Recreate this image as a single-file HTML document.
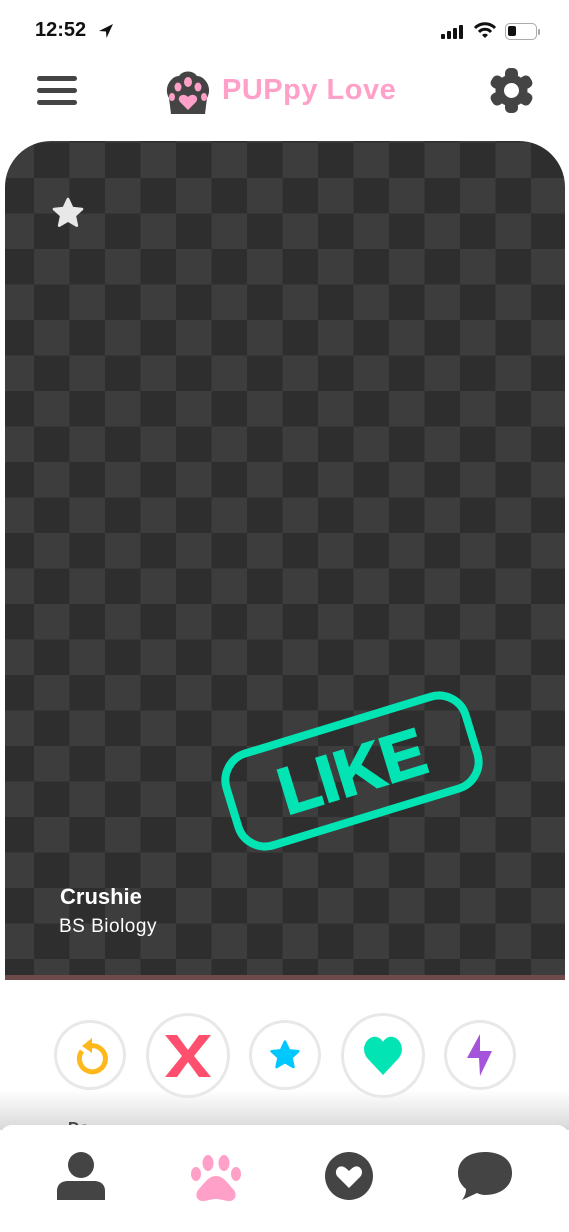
<!DOCTYPE html>
<html><head><meta charset="utf-8"><style>
*{margin:0;padding:0;box-sizing:border-box}
body{width:569px;height:1232px;background:#fff;position:relative;overflow:hidden;font-family:"Liberation Sans",sans-serif}
.abs{position:absolute}
.card{left:5px;top:141px;width:560px;height:839px;border-radius:46px 46px 0 0;overflow:hidden;
background:conic-gradient(#2e2e2e 25%,#3d3d3d 0 50%,#2e2e2e 0 75%,#3d3d3d 0);background-size:71px 71px;background-position:-6.5px 1.5px;border-bottom:5px solid #6d4b4b}
.btn{border-radius:50%;border:3px solid #e8e8e8;background:#fff;display:flex;align-items:center;justify-content:center}
</style></head><body>
<div class="abs" style="left:35px;top:19px;font-size:20px;font-weight:bold;color:#111">12:52</div>
<svg class="abs" style="left:97px;top:22px" width="18" height="18" viewBox="0 0 18 18"><path d="M16 2 L2 9 L9 9.5 L9.5 16Z" fill="#111"/></svg>
<svg class="abs" style="left:440px;top:24px" width="26" height="16" viewBox="0 0 26 16"><rect x="1" y="10" width="4" height="5" rx="1" fill="#111"/><rect x="7" y="7" width="4" height="8" rx="1" fill="#111"/><rect x="13" y="4" width="4" height="11" rx="1" fill="#111"/><rect x="19" y="1" width="4" height="14" rx="1" fill="#111"/></svg>
<svg class="abs" style="left:473px;top:22px" width="24" height="18" viewBox="0 0 24 18"><path d="M2 6 A14 14 0 0 1 22 6" stroke="#111" stroke-width="3" fill="none"/><path d="M6 10 A8 8 0 0 1 18 10" stroke="#111" stroke-width="3" fill="none"/><path d="M9 13 L12 16 L15 13 A4 4 0 0 0 9 13Z" fill="#111"/></svg>
<div class="abs" style="left:505px;top:23px;width:32px;height:17px;border:1.5px solid #aaa;border-radius:5px"><div style="position:absolute;left:2px;top:2px;width:8px;height:10px;background:#111;border-radius:2px"></div></div>
<div class="abs" style="left:538px;top:29px;width:2px;height:6px;background:#aaa;border-radius:1px"></div>
<div class="abs" style="left:37px;top:76px;width:40px;height:5px;background:#444;border-radius:3px"></div>
<div class="abs" style="left:37px;top:88px;width:40px;height:5px;background:#444;border-radius:3px"></div>
<div class="abs" style="left:37px;top:100px;width:40px;height:5px;background:#444;border-radius:3px"></div>
<svg class="abs" style="left:163px;top:70px" width="50" height="44" viewBox="0 0 50 44"><path d="M6 28 C0 18 8 6 16 6 C20 0 30 0 34 6 C42 6 50 18 44 28 L42 44 L8 44Z" fill="#444"/><ellipse cx="25" cy="12" rx="4" ry="5" fill="#ffa0c8"/><ellipse cx="15" cy="17" rx="3.5" ry="4.5" fill="#ffa0c8"/><ellipse cx="35" cy="17" rx="3.5" ry="4.5" fill="#ffa0c8"/><ellipse cx="9" cy="27" rx="3" ry="4" fill="#ffa0c8"/><ellipse cx="41" cy="27" rx="3" ry="4" fill="#ffa0c8"/><path d="M25 40 L17 32 C13 27 20 22 25 27 C30 22 37 27 33 32Z" fill="#ffa0c8"/></svg>
<div class="abs" style="left:222px;top:74px;font-size:29px;font-weight:bold;color:#ffa0c8;letter-spacing:0.5px">PUPpy Love</div>
<svg class="abs" style="left:489px;top:68px" width="45" height="45" viewBox="0 0 45 45"><g fill="#444"><circle cx="22.5" cy="22.5" r="16"/><g id="t"><rect x="16" y="0" width="13" height="12" rx="5"/><rect x="16" y="33" width="13" height="12" rx="5"/></g><use href="#t" transform="rotate(60 22.5 22.5)"/><use href="#t" transform="rotate(120 22.5 22.5)"/></g><circle cx="22.5" cy="22.5" r="7.5" fill="#fff"/></svg>
<div class="abs card">
<svg class="abs" style="left:46px;top:56px" width="34" height="32" viewBox="0 0 24 23"><path d="M12 1.5 L15 8 L22 8.7 L16.8 13.4 L18.3 20.5 L12 16.8 L5.7 20.5 L7.2 13.4 L2 8.7 L9 8 Z" fill="#e8e8e8" stroke="#e8e8e8" stroke-width="2" stroke-linejoin="round"/></svg>
<div class="abs" style="left:218px;top:578px;width:258px;height:104px;border:8px solid #03e4b4;border-radius:32px;transform:rotate(-17deg);display:flex;align-items:center;justify-content:center;font-size:66px;font-weight:900;color:#03e4b4;-webkit-text-stroke:2px #03e4b4">LIKE</div>
<div class="abs" style="left:55px;top:743px;font-size:22px;font-weight:bold;color:#fff">Crushie</div>
<div class="abs" style="left:54px;top:775px;font-size:19px;color:#fff;letter-spacing:0.5px">BS Biology</div>
</div>
<div class="abs" style="left:0;top:1090px;width:569px;height:40px;background:linear-gradient(#fff,#d8d8d8)"></div>
<div class="abs" style="left:68px;top:1120px;font-size:16px;font-weight:bold;color:#444">Do</div>
<div class="abs btn" style="left:54px;top:1020px;width:72px;height:70px"><svg width="40" height="42" viewBox="0 0 40 42"><path d="M12 17 A13 13 0 1 0 20 12" stroke="#ffb81c" stroke-width="5" fill="none"/><path d="M22 4 L12 12 L22 19Z" fill="#ffb81c"/></svg></div>
<div class="abs btn" style="left:146px;top:1013px;width:84px;height:85px"><svg width="46" height="42" viewBox="0 0 46 42"><path d="M0 0 H12 L23 15 L34 0 H46 L29 21 L46 42 H34 L23 27 L12 42 H0 L17 21Z" fill="#fe4f6f"/></svg></div>
<div class="abs btn" style="left:249px;top:1020px;width:72px;height:70px"><svg width="32" height="32" viewBox="0 0 24 23"><path d="M12 1.5 L15 8 L22 8.7 L16.8 13.4 L18.3 20.5 L12 16.8 L5.7 20.5 L7.2 13.4 L2 8.7 L9 8 Z" fill="#00c8ff" stroke="#00c8ff" stroke-width="2" stroke-linejoin="round"/></svg></div>
<div class="abs btn" style="left:341px;top:1013px;width:84px;height:85px"><svg width="40" height="42" viewBox="0 0 40 42"><path d="M20 40 L5 24 C-4 14 4 0 14 2 C17 3 19 5 20 7 C21 5 23 3 26 2 C36 0 44 14 35 24Z" fill="#03e4b4"/></svg></div>
<div class="abs btn" style="left:444px;top:1020px;width:72px;height:70px"><svg width="26" height="42" viewBox="0 0 26 42"><path d="M13 0 L0 24 H12 L13 42 L25 17 H13Z" fill="#a653dc"/></svg></div>
<div class="abs" style="left:0;top:1125px;width:569px;height:107px;background:#fff;border-radius:12px 12px 0 0"></div>
<svg class="abs" style="left:56px;top:1151px" width="50" height="50" viewBox="0 0 50 50"><circle cx="25" cy="14" r="13" fill="#444"/><path d="M1 49 V40 C1 33 6 30 12 30 H38 C44 30 49 33 49 40 V49Z" fill="#444"/></svg>
<svg class="abs" style="left:190px;top:1154px" width="52" height="48" viewBox="0 0 52 48"><ellipse cx="6" cy="20" rx="5" ry="7" fill="#ffa0c8"/><ellipse cx="18" cy="9" rx="5.5" ry="8" fill="#ffa0c8"/><ellipse cx="34" cy="9" rx="5.5" ry="8" fill="#ffa0c8"/><ellipse cx="46" cy="20" rx="5" ry="7" fill="#ffa0c8"/><path d="M26 22 C18 22 14 30 8 36 C4 42 8 48 14 47 C20 46 23 45 26 45 C29 45 32 46 38 47 C44 48 48 42 44 36 C38 30 34 22 26 22Z" fill="#ffa0c8"/></svg>
<svg class="abs" style="left:324px;top:1151px" width="50" height="50" viewBox="0 0 50 50"><circle cx="25" cy="25" r="24" fill="#444"/><path d="M25 37 L14 26 C9 21 14 13 20 16 C22 17 24 19 25 20 C26 19 28 17 30 16 C36 13 41 21 36 26Z" fill="#fff"/></svg>
<svg class="abs" style="left:457px;top:1151px" width="56" height="50" viewBox="0 0 56 50"><path d="M28 1 C43 1 55 8 55 22 C55 36 43 44 28 44 C25 44 22 43 20 42 L5 49 C8 45 9 42 9 38 C4 34 1 29 1 22 C1 8 13 1 28 1Z" fill="#444"/></svg>
</body></html>
